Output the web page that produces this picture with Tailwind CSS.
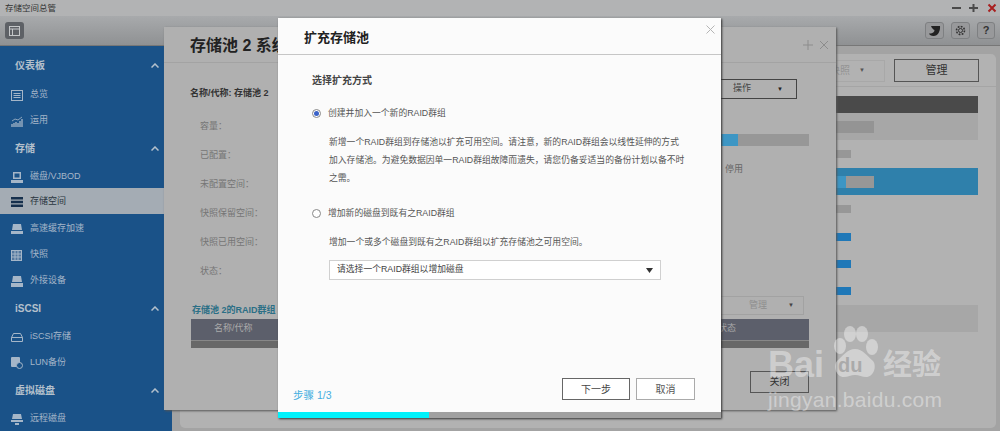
<!DOCTYPE html>
<html lang="zh-CN">
  <head>
    <meta charset="UTF-8" />
    <title>存储空间总管</title>
    <script src="https://cdn.jsdelivr.net/npm/@tailwindcss/browser@4"></script>
  </head>
  <body class="relative h-[431px] w-[1000px] overflow-hidden bg-[#a3a3a3] font-['Liberation_Sans','Noto_Sans_CJK_SC',sans-serif] text-[9px]">
    <!-- title bar -->
    <div class="flex h-[16px] items-center justify-between bg-[#b2b3b4] pl-[5px] pr-[3px] text-[#333]">
      <span class="text-[8.5px]">存储空间总管</span>
      <div class="flex items-center gap-[8px]">
        <svg width="10" height="10" viewBox="0 0 10 10"><path d="M1 5h9" stroke="#4a4a4a" stroke-width="2" /></svg>
        <svg width="10" height="10" viewBox="0 0 10 10"><path d="M0 5h9M4.500 1v8" stroke="#4a4a4a" stroke-width="2" /></svg>
        <svg width="10" height="10" viewBox="0 0 10 10"><path d="M1.500 1.500l7 7M8.500 1.500l-7 7" stroke="#a82020" stroke-width="2" /></svg>
      </div>
    </div>
    <!-- toolbar -->
    <div class="flex h-[30px] items-center justify-between border-b border-[#777] bg-gradient-to-b from-[#a8aaac] to-[#8f9193] pl-[5px] pr-[5px]">
      <div class="flex h-[17px] w-[19px] items-center justify-center rounded-[3px] bg-[#5e6166]">
        <svg width="11" height="10" viewBox="0 0 11 10" fill="none" stroke="#c4c6c8"><rect x="0.500" y="0.500" width="10" height="9" /><path d="M0.500 3h10M3.500 3v6.500" /></svg>
      </div>
      <div class="flex gap-[7px]">
        <div class="flex h-[17px] w-[19px] items-center justify-center rounded-[3px] border border-[#7e8082] bg-[#98999b]">
          <svg width="13" height="12" viewBox="0 0 13 12"><path d="M3 1h9c.5 5-2 10-6.500 10C3 11 1.500 10 1 8.500c3 .5 5.500-1 5.500-3.500C5 4.500 3.800 3 3 1z" fill="#222" /></svg>
        </div>
        <div class="flex h-[17px] w-[19px] items-center justify-center rounded-[3px] border border-[#7e8082] bg-[#98999b]">
          <svg width="11" height="11" viewBox="0 0 11 11" fill="none" stroke="#333"><circle cx="5.500" cy="5.500" r="2" /><circle cx="5.500" cy="5.500" r="4" stroke-width="1.600" stroke-dasharray="1.800 1.300" /></svg>
        </div>
        <div class="flex h-[17px] w-[18px] items-center justify-center rounded-[3px] border border-[#7e8082] bg-[#98999b] text-[11px] font-bold text-[#333]">?</div>
      </div>
    </div>

    <!-- sidebar -->
    <aside class="absolute left-0 top-[46px] h-[385px] w-[172px] bg-[#1a5288] pt-[4px] text-[#a5b6c8]">
      <div class="flex h-[30px] items-center justify-between pl-[15px] pr-[13px] text-[10px] font-bold text-[#b4c0cc]">
        <span>仪表板</span>
        <svg width="8" height="5" viewBox="0 0 8 5" fill="none" stroke="#b4c0cc" stroke-width="1.500"><path d="M.5 4.500l3.500-3.500 3.500 3.500" /></svg>
      </div>
      <div class="flex h-[26px] items-center gap-[7px] pl-[11px] pt-[4px]">
        <svg width="12" height="11" viewBox="0 0 12 11" fill="none" stroke="#a5b6c8"><rect x=".5" y=".5" width="11" height="10" /><path d="M2.500 3.500h7M2.500 5.500h7M2.500 7.500h7" /></svg>
        <span>总览</span>
      </div>
      <div class="flex h-[26px] items-center gap-[7px] pl-[11px] pt-[4px]">
        <svg width="12" height="11" viewBox="0 0 12 11" fill="none" stroke="#a5b6c8"><path d="M1 11V8M3 11V7M5 11V6M7 11V7M9 11V5M11 11V3" stroke-width="1.300" /><path d="M1 5l3-2 3 1 4-3" stroke-width=".8" /></svg>
        <span>运用</span>
      </div>
      <div class="flex h-[30px] items-center justify-between pl-[15px] pr-[13px] pt-[2px] text-[10px] font-bold text-[#b4c0cc]">
        <span>存储</span>
        <svg width="8" height="5" viewBox="0 0 8 5" fill="none" stroke="#b4c0cc" stroke-width="1.500"><path d="M.5 4.500l3.500-3.500 3.500 3.500" /></svg>
      </div>
      <div class="flex h-[26px] items-center gap-[7px] pl-[11px] pt-[4px]">
        <svg width="12" height="11" viewBox="0 0 12 11" fill="#a5b6c8"><path d="M2 0h8v7H2zM0 8h12v3H0z" /><rect x="3.500" y="1.500" width="5" height="4" fill="#1a5288" /></svg>
        <span>磁盘/VJBOD</span>
      </div>
      <div class="flex h-[26px] items-center gap-[7px] bg-[#a4acb4] pl-[11px] pt-[2px] text-[#2b3640]">
        <svg width="12" height="10" viewBox="0 0 12 10" fill="#16304d"><path d="M0 0h12v2.500H0zM0 3.700h12v2.500H0zM0 7.500h12V10H0z" /></svg>
        <span>存储空间</span>
      </div>
      <div class="flex h-[26px] items-center gap-[7px] pl-[11px] pt-[4px]">
        <svg width="12" height="10" viewBox="0 0 12 10" fill="#a5b6c8"><path d="M2 0h8l1 6H1zM0 7h12v3H0z" /></svg>
        <span>高速缓存加速</span>
      </div>
      <div class="flex h-[26px] items-center gap-[7px] pl-[11px] pt-[4px]">
        <svg width="12" height="11" viewBox="0 0 12 11" fill="none" stroke="#a5b6c8"><rect x=".5" y=".5" width="10" height="10" fill="#53789f" /><path d="M4 .5v10M7 .5v10M.5 4h10M.5 7h10" /></svg>
        <span>快照</span>
      </div>
      <div class="flex h-[26px] items-center gap-[7px] pl-[11px] pt-[4px]">
        <svg width="12" height="11" viewBox="0 0 12 11" fill="#a5b6c8"><path d="M2 0h8l1 6H1zM0 7h12v4H0z" /></svg>
        <span>外接设备</span>
      </div>
      <div class="flex h-[30px] items-center justify-between pl-[15px] pr-[13px] pt-[2px] text-[10px] font-bold text-[#b4c0cc]">
        <span>iSCSI</span>
        <svg width="8" height="5" viewBox="0 0 8 5" fill="none" stroke="#b4c0cc" stroke-width="1.500"><path d="M.5 4.500l3.500-3.500 3.500 3.500" /></svg>
      </div>
      <div class="flex h-[26px] items-center gap-[7px] pl-[11px] pt-[4px]">
        <svg width="12" height="9" viewBox="0 0 12 9" fill="none" stroke="#a5b6c8"><path d="M.5 4.500l2-4h7l2 4v4H.5zM.5 4.500h11" /></svg>
        <span>iSCSI存储</span>
      </div>
      <div class="flex h-[26px] items-center gap-[7px] pl-[11px] pt-[4px]">
        <svg width="12" height="12" viewBox="0 0 12 12"><rect x="0" y="0" width="9" height="10" rx="1" fill="#a5b6c8" /><circle cx="8.500" cy="8.500" r="3" fill="#1a5288" stroke="#a5b6c8" /></svg>
        <span>LUN备份</span>
      </div>
      <div class="flex h-[30px] items-center justify-between pl-[15px] pr-[13px] pt-[2px] text-[10px] font-bold text-[#b4c0cc]">
        <span>虚拟磁盘</span>
        <svg width="8" height="5" viewBox="0 0 8 5" fill="none" stroke="#b4c0cc" stroke-width="1.500"><path d="M.5 4.500l3.500-3.500 3.500 3.500" /></svg>
      </div>
      <div class="flex h-[26px] items-center gap-[7px] pl-[11px] pt-[4px]">
        <svg width="12" height="11" viewBox="0 0 12 11" fill="#a5b6c8"><path d="M2 0h8l1 5H1zM0 6h12v2H0zM4 9h4v2H4z" /></svg>
        <span>远程磁盘</span>
      </div>
    </aside>

    <!-- main panel behind the windows -->
    <section class="absolute left-[180px] top-[54px] h-[374px] w-[816px] rounded-[5px] bg-[#b2b2b2]">
      <div class="flex h-[33px] items-center justify-end gap-[9px] border-b border-[#a5a5a5] pr-[17px] pt-[1px]">
        <div class="flex h-[22px] w-[60px] items-center justify-end gap-[9px] border border-[#a8a8a8] pr-[19px] text-[10px] text-[#939393]">
          <span>快照</span>
          <span class="text-[6px] text-[#555]">▼</span>
        </div>
        <div class="flex h-[23px] w-[85px] items-center justify-center border border-[#555] text-[11px] text-[#333]">管理</div>
      </div>
      <div class="ml-[600px] mt-[9px] w-[198px]">
        <div class="h-[17px] bg-[#4a4a4a]"></div>
        <div class="flex h-[27px] items-center justify-end bg-[#a7a7a7] pr-[104px]"><div class="h-[12px] w-[60px] bg-[#949494]"></div></div>
        <div class="flex h-[28px] items-center justify-end pr-[127px]"><div class="h-[8px] w-[40px] bg-[#979797]"></div></div>
        <div class="flex h-[27px] items-center justify-end bg-[#2f80ab] pr-[104px]">
          <div class="h-[12px] w-[10px] bg-[#3d96c4]"></div>
          <div class="h-[12px] w-[28px] bg-[#979797]"></div>
        </div>
        <div class="flex h-[28px] items-center justify-end pr-[127px]"><div class="h-[8px] w-[40px] bg-[#979797]"></div></div>
        <div class="flex h-[27px] items-center justify-end pr-[127px]"><div class="h-[8px] w-[40px] bg-[#1f78b8]"></div></div>
        <div class="flex h-[27px] items-center justify-end pr-[127px]"><div class="h-[8px] w-[40px] bg-[#1f78b8]"></div></div>
        <div class="flex h-[27px] items-center justify-end pr-[127px]"><div class="h-[8px] w-[40px] bg-[#1f78b8]"></div></div>
        <div class="mt-[1px] h-[27px] bg-[#a7a7a7]"></div>
      </div>
    </section>

    <!-- pool info window -->
    <section class="absolute left-[164px] top-[27px] h-[383px] w-[672px] bg-[#b0b0b0] shadow-[1px_1px_2px_#555]">
      <div class="flex h-[36px] items-center justify-between border-b border-[#a3a3a3] pl-[26px] pr-[7px]">
        <span class="pt-[3px] text-[16px] font-bold text-[#222]">存储池 2 系统</span>
        <div class="flex items-center gap-[6px]">
          <svg width="10" height="10" viewBox="0 0 10 10" stroke="#8c8c8c"><path d="M0 5h10M5 0v10" /></svg>
          <svg width="10" height="10" viewBox="0 0 10 10" stroke="#8c8c8c"><path d="M1 1l8 8M9 1l-8 8" /></svg>
        </div>
      </div>
      <div class="pl-[26px] pt-[16px] text-[#333]">
        <div class="flex h-[20px] items-start justify-between pr-[39px]">
          <span class="pt-[8px] font-bold">名称/代称: 存储池 2</span>
          <div class="flex h-[20px] w-[77px] items-center justify-between border border-[#444] pl-[12px] pr-[13px] text-[#444]">
            <span>操作</span><span class="text-[6px] text-[#222]">▼</span>
          </div>
        </div>
        <div class="flex justify-between pr-[27px] pt-[13px] text-[#757575]">
          <div class="pl-[10px]">
            <div class="flex h-[29px] items-center">容量：</div>
            <div class="flex h-[29px] items-center">已配置：</div>
            <div class="flex h-[29px] items-center">未配置空间：</div>
            <div class="flex h-[29px] items-center">快照保留空间：</div>
            <div class="flex h-[29px] items-center">快照已用空间：</div>
            <div class="flex h-[29px] items-center">状态：</div>
          </div>
          <div class="w-[89px] pt-[22px]">
            <div class="flex h-[12px] bg-[#979797]"><div class="w-[18px] bg-[#3d96c4]"></div></div>
            <div class="mt-[17px] pl-[5px] text-[#666]">停用</div>
          </div>
        </div>
      </div>
      <div class="flex justify-end pr-[32px] pt-[10px]">
        <div class="flex h-[19px] w-[100px] items-center justify-between border border-[#a2a2a2] pl-[44px] pr-[9px] text-[#8e8e8e]"><span>管理</span><span class="text-[6px] text-[#444]">▼</span></div>
      </div>
      <div class="-mt-[11px] pl-[28px] text-[9px] font-bold text-[#2b6f86]">存储池 2的RAID群组</div>
      <div class="ml-[27px] mt-[1px] w-[618px]">
        <div class="flex h-[21px] items-center justify-between bg-[#5c5f6b] pl-[23px] pr-[73px] text-[#aaa]"><span>名称/代称</span><span>状态</span></div>
        <div class="h-[8px] border-t border-[#888] bg-[#686868]"></div>
      </div>
      <div class="flex justify-end pr-[27px] pt-[23px]">
        <div class="flex h-[22px] w-[59px] items-center justify-center border border-[#555] text-[10px] text-[#333]">关闭</div>
      </div>
    </section>

    <!-- expand pool dialog -->
    <section class="absolute left-[278px] top-[18px] flex h-[400px] w-[443px] flex-col bg-[#fbfbfb] shadow-[1px_1px_2px_#333]">
      <header class="relative flex h-[37px] shrink-0 items-center border-b border-[#c6c6c6] pl-[26px] pt-[3px] text-[13px] font-bold text-[#222]">
        扩充存储池
        <svg class="absolute right-[6px] top-[7px]" width="9" height="9" viewBox="0 0 9 9" stroke="#b5b5b5"><path d="M.5.5l8 8M8.500.5l-8 8" /></svg>
      </header>
      <div class="flex-1 pl-[34px] text-[8.8px] text-[#555]">
        <h2 class="pt-[19px] text-[10px] font-bold leading-[14px] text-[#444]">选择扩充方式</h2>
        <label class="mt-[18px] flex items-center gap-[7px] leading-[14px]">
          <span class="flex h-[9px] w-[9px] items-center justify-center rounded-full border border-[#888] bg-white"><span class="h-[5px] w-[5px] rounded-full bg-[#3a62c8]"></span></span>
          创建并加入一个新的RAID群组
        </label>
        <p class="mt-[13px] pl-[17px] leading-[18px]">
          新增一个RAID群组到存储池以扩充可用空间。请注意，新的RAID群组会以线性延伸的方式<br />
          加入存储池。为避免数据因单一RAID群组故障而遗失，请您仍备妥适当的备份计划以备不时<br />
          之需。
        </p>
        <label class="mt-[19px] flex items-center gap-[7px] leading-[14px]">
          <span class="h-[9px] w-[9px] rounded-full border border-[#888] bg-white"></span>
          增加新的磁盘到既有之RAID群组
        </label>
        <p class="mt-[15px] pl-[17px] leading-[14px]">增加一个或多个磁盘到既有之RAID群组以扩充存储池之可用空间。</p>
        <div class="ml-[17px] mt-[11px] flex h-[20px] w-[332px] items-center justify-between border border-[#d0d0d0] bg-white pl-[7px] pr-[7px] text-[#444]">
          <span>请选择一个RAID群组以增加磁盘</span>
          <svg width="7" height="5" viewBox="0 0 7 5" fill="#333"><path d="M0 0h7L3.500 5z" /></svg>
        </div>
      </div>
      <footer class="flex items-end justify-between pb-[10px] pl-[15px] pr-[26px]">
        <span class="text-[10.500px] leading-[14px] text-[#45aee0]">步骤 1/3</span>
        <div class="mb-[2px] flex gap-[6px]">
          <button class="h-[22px] w-[68px] border border-[#666] bg-white text-[10px] text-[#444]">下一步</button>
          <button class="h-[22px] w-[59px] border border-[#aaa] bg-white text-[10px] text-[#555]">取消</button>
        </div>
      </footer>
      <div class="flex h-[6px] shrink-0 bg-[#a0a0a0]"><div class="w-[151px] bg-[#00f2fb]"></div></div>
    </section>

    <!-- baidu watermark -->
    <div class="absolute left-[768px] top-[325px] h-[90px] w-[180px] text-white/40">
      <span class="absolute left-0 top-[20px] text-[36px] font-bold leading-[40px]">Bai</span>
      <svg class="absolute left-[59px] top-0" width="56" height="56" viewBox="0 0 56 56" fill="#fff" fill-opacity=".4">
        <ellipse cx="13" cy="21" rx="6" ry="8" />
        <ellipse cx="23" cy="9" rx="6" ry="8" />
        <ellipse cx="35" cy="9" rx="6" ry="8" />
        <ellipse cx="45" cy="22" rx="6" ry="8" />
        <path d="M28 24c8 0 12 7 18 12 4 5 1 16-7 16-4 0-7-2-11-2s-7 2-11 2c-8 0-11-11-7-16 6-5 10-12 18-12z" />
      </svg>
      <span class="absolute left-[70px] top-[28px] text-[20px] font-bold leading-[24px] text-[#aaa]">du</span>
      <span class="absolute left-[115px] top-[23px] text-[29px] font-bold leading-[34px]">经验</span>
      <span class="absolute left-0 top-[62px] text-[21px] leading-[26px] tracking-[.3px]">jingyan.baidu.com</span>
    </div>
  </body>
</html>
